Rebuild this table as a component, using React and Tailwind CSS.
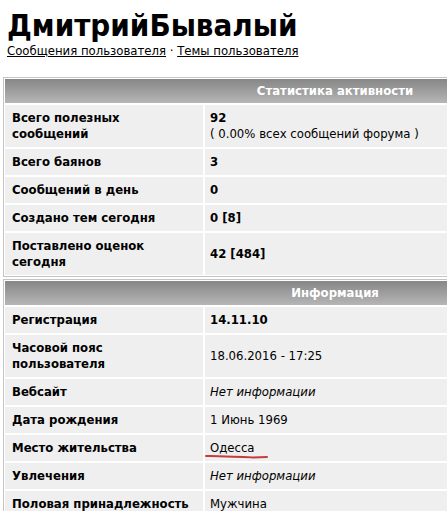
import React from "react";

const stats = [
  { label: "Всего полезных сообщений", value: (
      <>
        <b>92</b>
        <br />( 0.00% всех сообщений форума )
      </>
    ) },
  { label: "Всего баянов", value: <b>3</b> },
  { label: "Сообщений в день", value: <b>0</b> },
  { label: "Создано тем сегодня", value: <b>0 [8]</b> },
  { label: "Поставлено оценок сегодня", value: <b>42 [484]</b> },
];

const info = [
  { label: "Регистрация", value: <b>14.11.10</b> },
  { label: "Часовой пояс пользователя", value: "18.06.2016 - 17:25" },
  { label: "Вебсайт", value: <i>Нет информации</i> },
  { label: "Дата рождения", value: "1 Июнь 1969" },
  { label: "Место жительства", value: "Одесса", mark: true },
  { label: "Увлечения", value: <i>Нет информации</i> },
  { label: "Половая принадлежность", value: "Мужчина" },
];

function Block({ title, rows, className }) {
  return (
    <div className={"w-[466px] border border-[#c4c4c4] p-px " + className}>
      <div className="grid h-6 grid-cols-[198px_1fr] items-center bg-linear-to-b from-[#878787] to-[#b6b6b6]">
        <div />
        <div className="text-center font-bold text-white">{title}</div>
      </div>
      <div className="mt-[2px] grid grid-cols-[198px_1fr] gap-[2px]">
        {rows.map((r) => (
          <React.Fragment key={r.label}>
            <div className="flex items-center bg-[#efefef] px-[7px] py-[5px] font-bold">
              <span className={r.label.length > 20 && r.label !== "Половая принадлежность" ? "w-[140px]" : ""}>{r.label}</span>
            </div>
            <div className="relative flex items-center bg-[#efefef] px-[5px] py-[5px]">
              <div>{r.value}</div>
              {r.mark && (
                <svg className="absolute left-[0px] top-[19px]" width="64" height="6" viewBox="0 0 64 6">
                  <path d="M1 2 C20 2.5 40 3 48 3.5 L62 3" stroke="#c63b3d" strokeWidth="2" fill="none" strokeLinecap="round" />
                </svg>
              )}
            </div>
          </React.Fragment>
        ))}
      </div>
    </div>
  );
}

export default function App() {
  return (
    <div
      className="w-[447px] h-[511px] overflow-hidden bg-white text-[13px] leading-4 text-black font-stretch-semi-condensed"
      style={{ fontFamily: '"DejaVu Sans Condensed", "DejaVu Sans", Verdana, sans-serif' }}
    >
      <div className="pl-[7px] pt-2">
        <h1 className="text-[31px] font-bold leading-[35px]">ДмитрийБывалый</h1>
        <div className="leading-[15px]">
          <a href="#" className="underline">Сообщения пользователя</a> · <a href="#" className="underline">Темы пользователя</a>
        </div>
      </div>
      <Block title="Статистика активности" rows={stats} className="ml-[3px] mt-[19px]" />
      <Block title="Информация" rows={info} className="ml-[3px] mt-[2px]" />
    </div>
  );
}
